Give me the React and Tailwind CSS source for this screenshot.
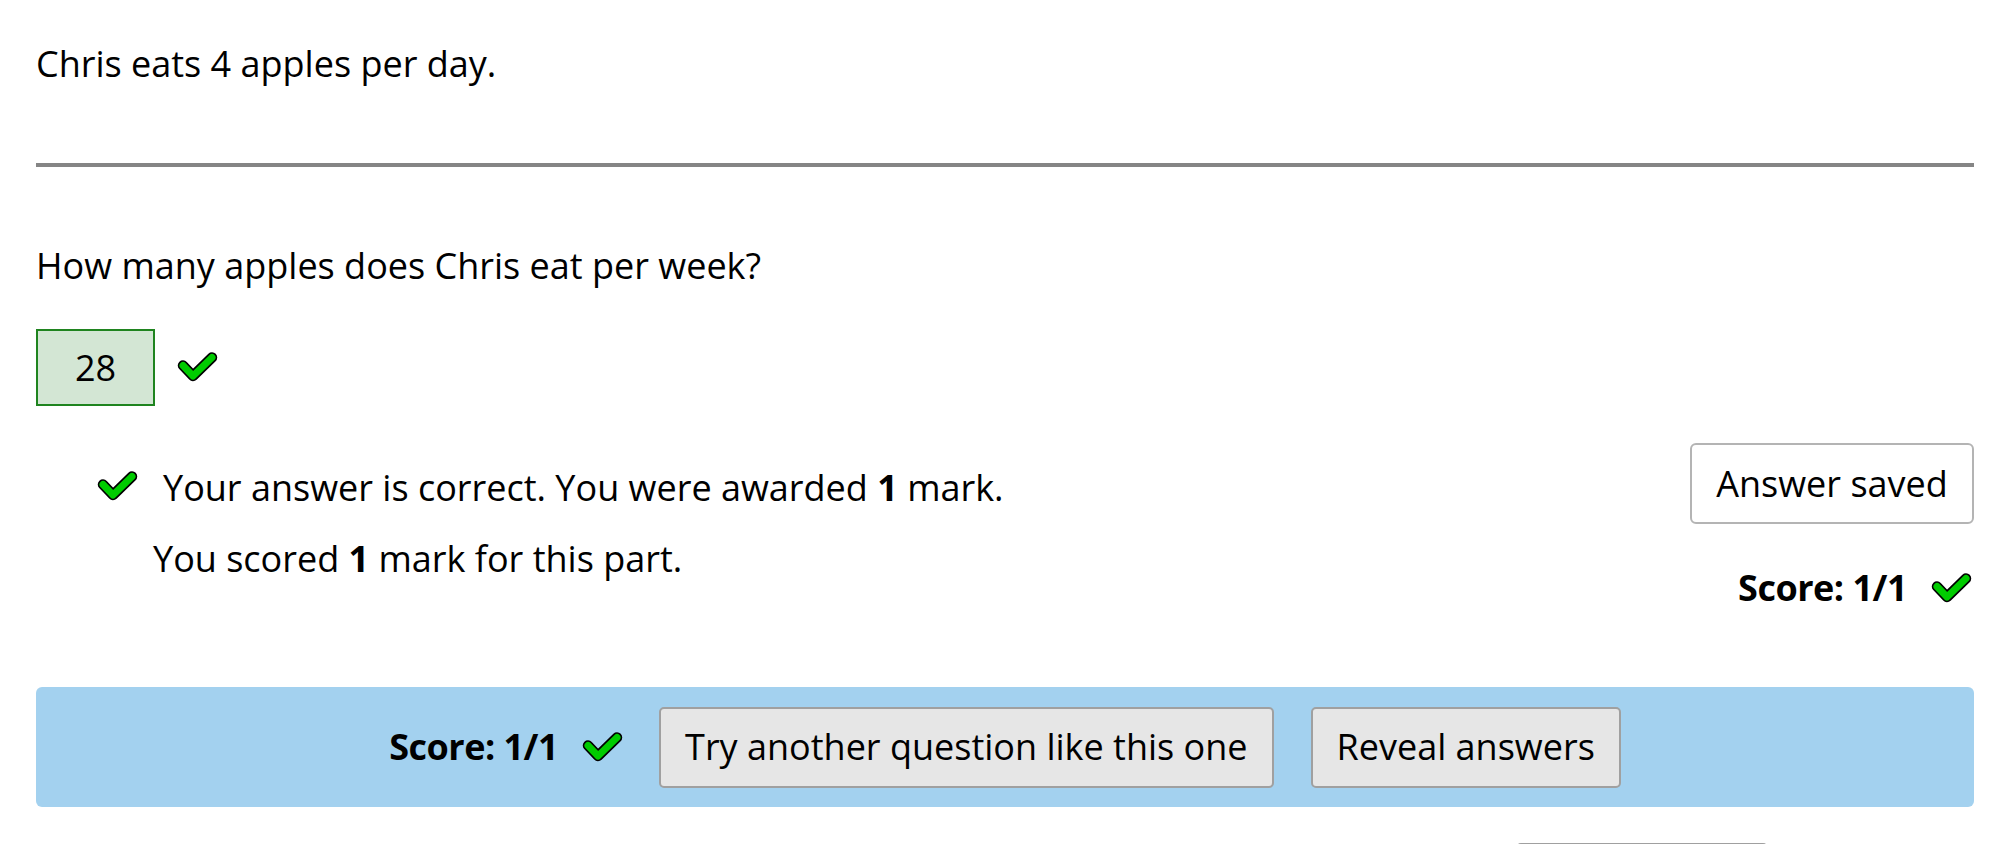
import React from "react";

function Check({ className = "" }) {
  return (
    <svg
      className={className}
      width="41"
      height="33"
      viewBox="0 0 41 33"
      fill="none"
      aria-hidden="true"
    >
      <polyline
        points="6,14.5 16,25 35,6.5"
        stroke="#000"
        strokeWidth="10.5"
        strokeLinecap="round"
        strokeLinejoin="round"
      />
      <polyline
        points="6,14.5 16,25 35,6.5"
        stroke="#00cc00"
        strokeWidth="7"
        strokeLinecap="round"
        strokeLinejoin="round"
      />
    </svg>
  );
}

export default function App() {
  return (
    <div className="px-[36px] font-['Open_Sans',_'Noto_Sans',_sans-serif] text-[36px] leading-[54px] text-black bg-white">
      <p className="mt-[37px]">Chris eats 4 apples per day.</p>

      <div className="mt-[72px] h-[4px] bg-[#858585]" />

      <p className="mt-[72px]">How many apples does Chris eat per week?</p>

      <div className="mt-[36px] flex items-center">
        <div className="w-[119px] h-[77px] border-2 border-[#1f841f] bg-[#d3e6d4] flex items-center justify-center">
          28
        </div>
        <Check className="ml-[22px]" />
      </div>

      <div className="mt-[37px] flex justify-between items-start">
        <div className="pt-[18px]">
          <div className="flex items-center pl-[61px]">
            <Check className="-mt-[4px]" />
            <span className="ml-[25px]">
              Your answer is correct. You were awarded <b className="font-bold">1</b> mark.
            </span>
          </div>
          <div className="mt-[17px] pl-[117px]">
            You scored <b className="font-bold">1</b> mark for this part.
          </div>
        </div>
        <div className="flex flex-col items-end">
          <div className="h-[81px] w-[284px] border-2 border-[#b4b4b4] rounded-[6px] bg-white flex items-center justify-center">
            Answer saved
          </div>
          <div className="mt-[37px] flex items-center pr-[2px]">
            <span className="font-bold tracking-[-0.5px]">Score: 1/1</span>
            <Check className="ml-[24px]" />
          </div>
        </div>
      </div>

      <div className="mt-[72px] h-[120px] rounded-[6px] bg-[#a3d1ef] flex items-center justify-center">
        <span className="font-bold tracking-[-0.5px]">Score: 1/1</span>
        <Check className="ml-[24px]" />
        <div className="ml-[36px] h-[81px] px-[24px] border-2 border-[#a0a0a0] rounded-[5px] bg-[#e6e6e6] flex items-center">
          Try another question like this one
        </div>
        <div className="ml-[37px] h-[81px] px-[24px] border-2 border-[#a0a0a0] rounded-[5px] bg-[#e6e6e6] flex items-center">
          Reveal answers
        </div>
      </div>

      <div className="mt-[36px] flex justify-end pr-[206px] pb-[40px]">
        <div className="h-[81px] w-[252px] border-2 border-[#a0a0a0] rounded-[5px] bg-white" />
      </div>
    </div>
  );
}
